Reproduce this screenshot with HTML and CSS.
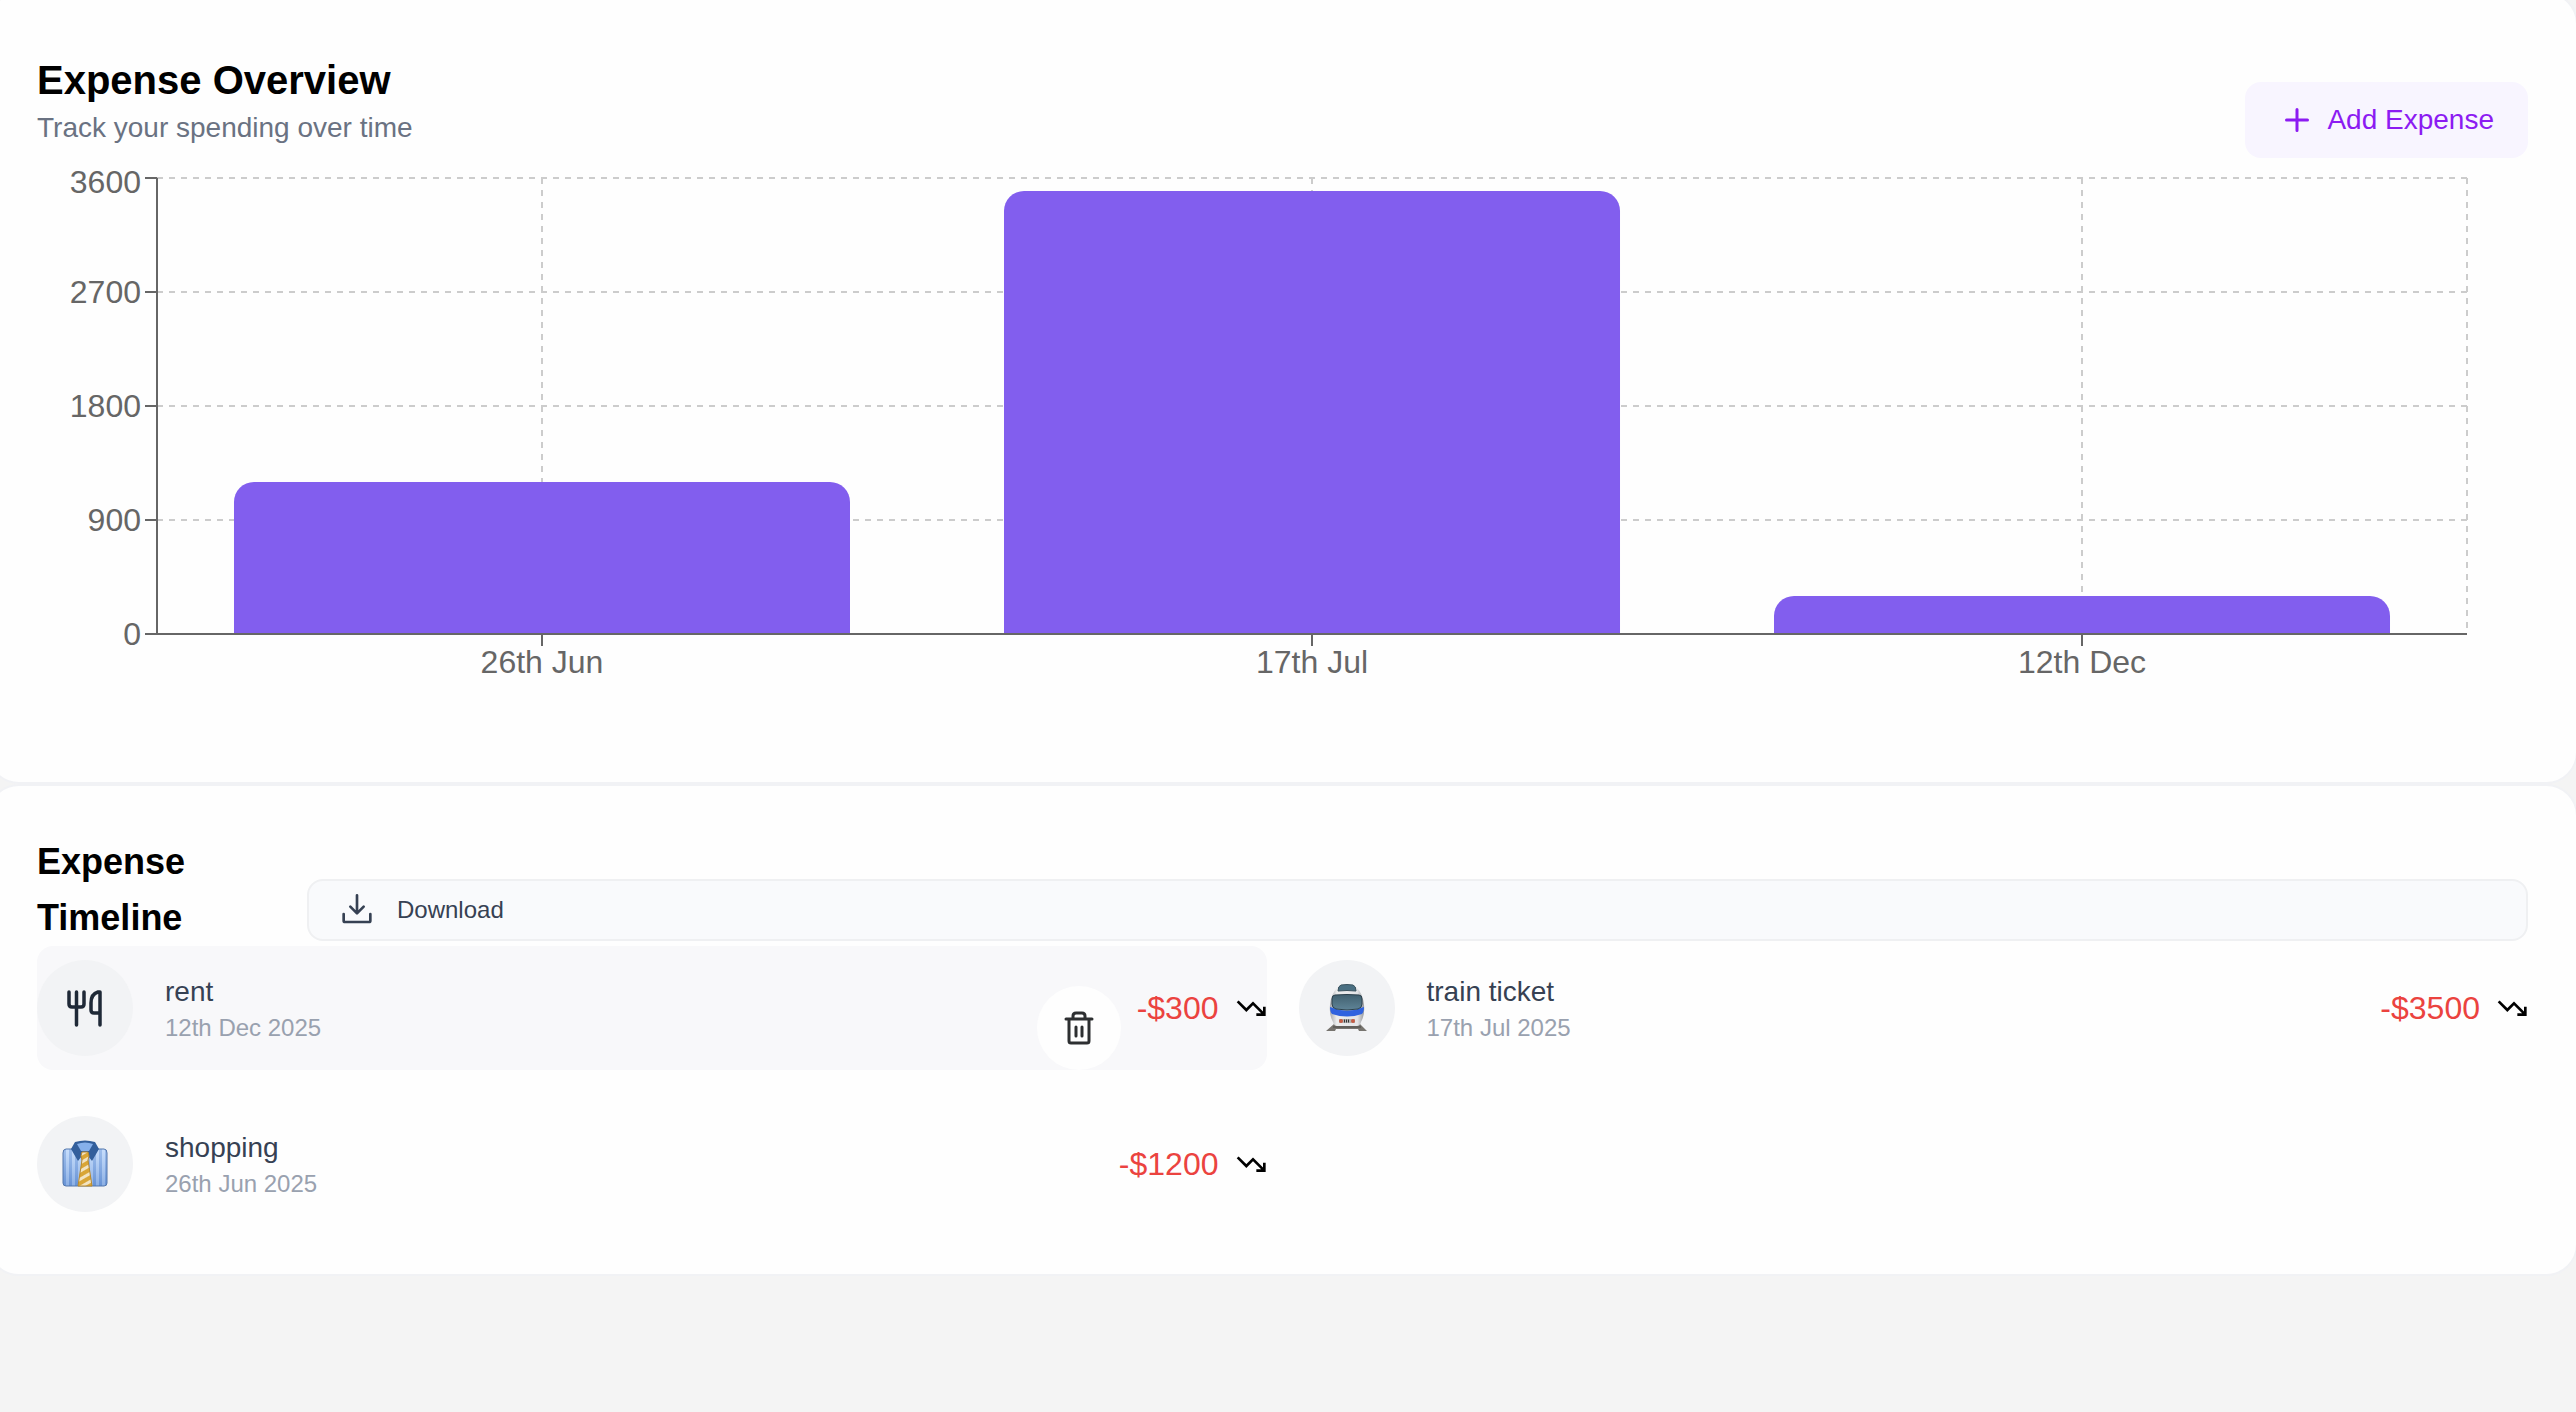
FILE: index.html
```html
<!DOCTYPE html>
<html lang="en">
<head>
<meta charset="utf-8">
<meta name="viewport" content="width=device-width, initial-scale=1">
<title>Expenses</title>
<link rel="stylesheet" href="styles.css">
</head>
<body>
<svg width="0" height="0" class="sprite" aria-hidden="true">
  <symbol id="trend-down" viewBox="0 0 24 24">
    <path d="M22 17 13.500 8.500l-5 5L2 7M16 17h6v-6" fill="none" stroke="currentColor" stroke-width="2" stroke-linejoin="miter" stroke-linecap="butt"/>
  </symbol>
</svg>
<main class="page">
  <section class="card overview">
    <header class="overview-head">
      <div>
        <h1 class="title">Expense Overview</h1>
        <p class="subtitle">Track your spending over time</p>
      </div>
      <button type="button" class="add-button">
        <svg class="icon-plus" viewBox="0 0 24 24" fill="none" stroke="currentColor" stroke-width="2" stroke-linecap="round" aria-hidden="true"><path d="M5 12h14M12 5v14"/></svg>
        Add Expense
      </button>
    </header>
    <div class="chart">
      <svg class="plot" role="img" aria-label="Expenses by date">
        <g class="grid">
          <line x1="0" x2="100%" y1="0" y2="0"/>
          <line x1="0" x2="100%" y1="25%" y2="25%"/>
          <line x1="0" x2="100%" y1="50%" y2="50%"/>
          <line x1="0" x2="100%" y1="75%" y2="75%"/>
          <line x1="16.667%" x2="16.667%" y1="0" y2="100%"/>
          <line x1="50%" x2="50%" y1="0" y2="100%"/>
          <line x1="83.333%" x2="83.333%" y1="0" y2="100%"/>
          <line x1="100%" x2="100%" y1="0" y2="100%"/>
        </g>
        <svg class="bars" width="100%" height="100%">
          <rect x="3.333%" y="304" width="26.667%" height="200" rx="20"/>
          <rect x="36.667%" y="13" width="26.667%" height="500" rx="20"/>
          <rect x="70%" y="418" width="26.667%" height="100" rx="20"/>
        </svg>
        <g class="axis">
          <line x1="0" x2="0" y1="0" y2="100%"/>
          <line x1="0" x2="100%" y1="100%" y2="100%"/>
          <line x1="-12" x2="0" y1="0" y2="0"/>
          <line x1="-12" x2="0" y1="25%" y2="25%"/>
          <line x1="-12" x2="0" y1="50%" y2="50%"/>
          <line x1="-12" x2="0" y1="75%" y2="75%"/>
          <line x1="-12" x2="0" y1="100%" y2="100%"/>
          <line x1="16.667%" x2="16.667%" y1="456" y2="468"/>
          <line x1="50%" x2="50%" y1="456" y2="468"/>
          <line x1="83.333%" x2="83.333%" y1="456" y2="468"/>
        </g>
        <g class="y-labels">
          <text x="-16" y="15">3600</text>
          <text x="-16" y="125">2700</text>
          <text x="-16" y="239">1800</text>
          <text x="-16" y="353">900</text>
          <text x="-16" y="467">0</text>
        </g>
        <g class="x-labels">
          <text x="16.667%" y="495">26th Jun</text>
          <text x="50%" y="495">17th Jul</text>
          <text x="83.333%" y="495">12th Dec</text>
        </g>
      </svg>
    </div>
  </section>

  <section class="card">
    <header class="timeline-head">
      <h2 class="timeline-title">Expense Timeline</h2>
      <button type="button" class="download-button">
        <svg class="icon" viewBox="0 0 24 24" fill="none" stroke="currentColor" stroke-width="2" stroke-linecap="round" stroke-linejoin="round" aria-hidden="true"><path d="M22 15v5a1 1 0 0 1-1 1H3a1 1 0 0 1-1-1v-5M7 9.500l5 5 5-5M12 14V1"/></svg>
        Download
      </button>
    </header>
    <ul class="list">
      <li class="row row-active">
        <span class="avatar">
          <svg class="pic" viewBox="0 0 48 48" fill="none" stroke="#1f2937" stroke-width="3.500" stroke-linecap="round" stroke-linejoin="round" aria-hidden="true"><path d="M8 8v12q0 3 3 3h9q3 0 3-3V8M15.500 8v33M39 41V8h-2q-7 2-7 11v7q0 3 3 3h6"/></svg>
        </span>
        <div class="info"><p class="name">rent</p><p class="date">12th Dec 2025</p></div>
        <button type="button" class="delete-button" aria-label="Delete rent">
          <svg class="icon-trash" viewBox="0 0 30 34" fill="none" stroke="#2d2f31" stroke-width="3" stroke-linecap="round" stroke-linejoin="round" aria-hidden="true"><path d="M2 8h26M9 8V5q0-3 3-3h6q3 0 3 3v3M5 8v22q0 2 2 2h16q2 0 2-2V8M12 16v9M18 16v9"/></svg>
        </button>
        <span class="amount">-$300</span>
        <svg class="icon" aria-hidden="true"><use href="#trend-down"/></svg>
      </li>
      <li class="row">
        <span class="avatar">
          <svg class="pic" viewBox="0 0 48 48" aria-hidden="true">
            <defs>
              <linearGradient id="body" x1="0" x2="1" y1="0" y2="0"><stop offset="0" stop-color="#a5a7ab"/><stop offset=".2" stop-color="#eceded"/><stop offset=".8" stop-color="#e4e4e6"/><stop offset="1" stop-color="#96989c"/></linearGradient>
              <linearGradient id="glass" x1="0" x2="0" y1="0" y2="1"><stop offset="0" stop-color="#41606f"/><stop offset="1" stop-color="#5f8497"/></linearGradient>
            </defs>
            <path d="M11 40h26l7 7h-8l-1-2H13l-1 2H3z" fill="#77746f"/>
            <path d="M10 43h28" stroke="#4d4b49" stroke-width="1"/>
            <path d="M14 4Q17 1 24 1t10 3q6 6 7 17 1 10-3 17-1 4-4 4H14q-3 0-4-4-4-7-3-17Q8 10 14 4z" fill="url(#body)"/>
            <path d="M15 7q0-5 3-6 6-1 12 0 3 1 3 6-9-1-18 0z" fill="#4a6f82" stroke="#3b535f"/>
            <path d="M7 23q0 5 2 7 15 5 30 0 2-2 2-7-17 7-34 0z" fill="#2f62df"/>
            <path d="M12 11q12-1 24 0 3 0 3 4v5q0 4-4 5-11 2-22 0-4-1-4-5v-5q0-4 3-4z" fill="url(#glass)" stroke="#2c414d" stroke-width="1"/>
            <path d="M16 35h16v4H16z" fill="#b3b2b1"/><path d="M21 37h6" stroke="#333" stroke-width="3" stroke-dasharray="1 1"/>
            <circle cx="18" cy="37" r="2" fill="#c65c43"/><circle cx="30" cy="37" r="2" fill="#c65c43"/>
          </svg>
        </span>
        <div class="info"><p class="name">train ticket</p><p class="date">17th Jul 2025</p></div>
        <span class="amount">-$3500</span>
        <svg class="icon" aria-hidden="true"><use href="#trend-down"/></svg>
      </li>
      <li class="row">
        <span class="avatar">
          <svg class="pic" viewBox="0 0 48 48" aria-hidden="true">
            <defs>
              <pattern id="stripes" width="6" height="48" patternUnits="userSpaceOnUse"><path d="M0 0h6v48H0z" fill="#b4d2fa"/><path d="M2 0h3v48H2z" fill="#7fa9e6"/></pattern>
              <pattern id="tie" width="7" height="7" patternUnits="userSpaceOnUse" patternTransform="rotate(-30)"><path d="M0 0h7v7H0z" fill="#d9a536"/><path d="M0 0h7v3H0z" fill="#f2e3c2"/></pattern>
              <linearGradient id="shade" x1="0" x2="0" y1="0" y2="1"><stop offset="0" stop-color="#fff" stop-opacity=".25"/><stop offset="1" stop-color="#2c5cae" stop-opacity=".3"/></linearGradient>
            </defs>
            <path d="M5 9h38q3 0 3 4v30q0 3-3 3H5q-3 0-3-3V13q0-4 3-4z" fill="url(#stripes)"/>
            <path d="M5 9h38q3 0 3 4v30q0 3-3 3H5q-3 0-3-3V13q0-4 3-4z" fill="url(#shade)" stroke="#5377ad" stroke-width="1"/>
            <path d="M14 2q10-3 20 0l4 7-7 12-7-9-7 9-7-12z" fill="#335f9c"/>
            <path d="M16 4q8-3 16 0l-4 7h-8z" fill="#86b0eb"/>
            <path d="M21 12h6l1 4-1 4 4 26H17l4-26-1-4z" fill="url(#tie)" stroke="#b98a2d" stroke-width="1"/>
          </svg>
        </span>
        <div class="info"><p class="name">shopping</p><p class="date">26th Jun 2025</p></div>
        <span class="amount">-$1200</span>
        <svg class="icon" aria-hidden="true"><use href="#trend-down"/></svg>
      </li>
    </ul>
  </section>
</main>
</body>
</html>
```
FILE: styles.css
```css
* { box-sizing: border-box; }
html { background: #f4f4f4; }
body { margin: 0; overflow-x: hidden; font-family: "Liberation Sans", Arial, sans-serif; }
h1, h2, p, ul { margin: 0; padding: 0; }
button { font-family: inherit; cursor: pointer; }
svg { flex: none; }
.sprite { position: absolute; }

/* Cards run slightly past both window edges */
.page { margin: -8px -2px 0 -13px; }
.card { padding: 48px; border: 2px solid #f1f2f5; border-radius: 32px; background: #fefefe; }

.overview-head { display: flex; justify-content: space-between; align-items: center; }
.title { font-size: 40px; line-height: 56px; font-weight: 700; color: #000; }
.subtitle { font-size: 28px; line-height: 40px; color: #6a7282; }
.add-button { display: flex; align-items: center; gap: 12px; height: 76px; margin-top: 40px; padding: 0 34px; border: 0; border-radius: 16px; background: #f8f5ff; color: #8c1bf2; font-size: 28px; }
.icon-plus { width: 36px; height: 36px; }

.chart { height: 576px; padding: 20px 61px 0 120px; }
.plot { display: block; width: 100%; height: 456px; overflow: visible; }
.grid { stroke: #ccc; stroke-width: 2; stroke-dasharray: 6 6; }
.axis { stroke: #666; stroke-width: 2; }
.bars { fill: #825eee; overflow: hidden; }
.y-labels, .x-labels { fill: #666; font-size: 32px; }
.y-labels { text-anchor: end; }
.x-labels { text-anchor: middle; }

.timeline-head { display: flex; align-items: flex-end; gap: 100px; }
.timeline-title { width: 170px; font-size: 36px; line-height: 56px; font-weight: 700; color: #000; }
.download-button { flex: 1; display: flex; align-items: center; gap: 24px; height: 62px; margin-bottom: 5px; padding: 0 32px; border: 2px solid #eff0f2; border-radius: 16px; background: #f9fafc; color: #364153; font-size: 24px; }
.icon { width: 32px; height: 32px; }

.list { display: grid; grid-template-columns: 1fr 1fr; gap: 32px; list-style: none; }
.row { display: flex; align-items: center; gap: 16px; height: 124px; border-radius: 16px; }
.row-active { background: #f8f8fa; }
.avatar { flex: none; display: grid; place-items: center; width: 96px; height: 96px; border-radius: 50%; background: #f2f3f5; }
.pic { width: 48px; height: 48px; }
.info { flex: 1; padding-left: 16px; }
.name { font-size: 28px; line-height: 40px; color: #364153; }
.date { font-size: 24px; line-height: 32px; color: #99a1af; }
.delete-button { align-self: flex-end; display: grid; place-items: center; width: 84px; height: 84px; padding: 0; border: 0; border-radius: 50%; background: #fefefe; }
.icon-trash { width: 30px; height: 34px; }
.amount { font-size: 32px; line-height: 40px; color: #eb433f; }
```
